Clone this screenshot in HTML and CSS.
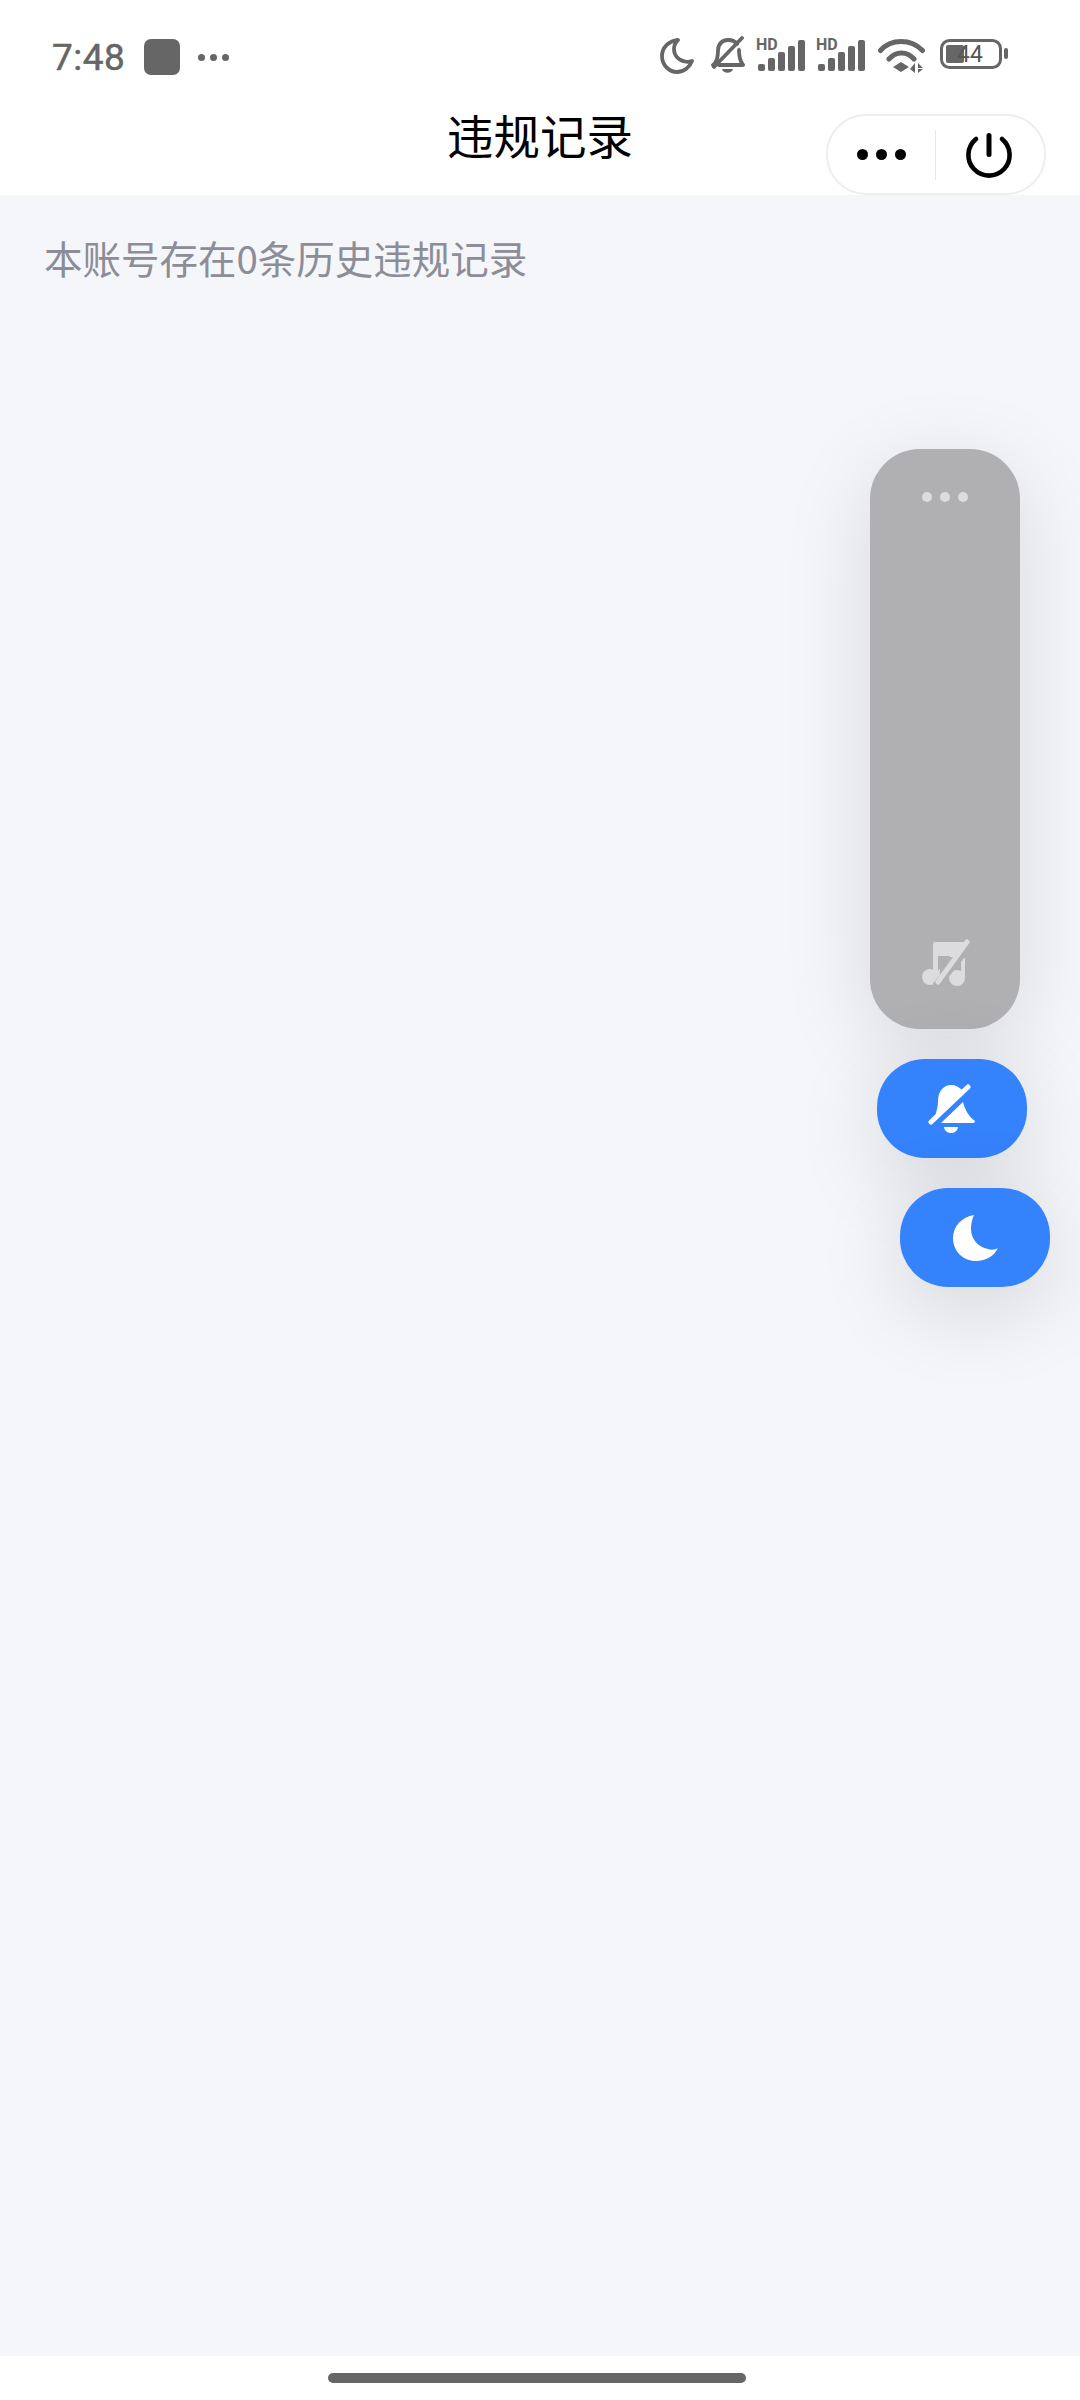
FILE: index.html
```html
<!DOCTYPE html>
<html lang="zh-CN">
<head>
    <meta charset="UTF-8">
    <meta name="viewport" content="width=device-width, initial-scale=1.0">
    <title>违规记录</title>

    <link rel="stylesheet" href="styles.css">
</head>
<body>
    <div class="page">
        <div class="top">
            <div class="status">
                <div class="status-left">
                    <span class="time">7:48</span>
                    <span class="app-square"></span>
                    <span class="status-dots"><i></i><i></i><i></i></span>
                </div>
                <div class="status-right">
                    <svg class="ic-moon" width="34" height="36" viewBox="0 0 34 36">
                        <path d="M18 2C8 3 2 10 2 18C2 27 9 34 17 34C24 34 30 29 32 23C29 24 27 24 25 23.500C18 22 14 17 14 11C14 8 15 5 18 2Z" fill="none" stroke="#666" stroke-width="3.800" stroke-linejoin="round"/>
                    </svg>
                    <svg class="ic-bell" width="35" height="38" viewBox="0 0 35 38">
                        <path d="M3 29C7 26 8 22 8 15C8 7 13 4 18 4C22 4 25 5 27 8M29 14C29 21 30 25 33 29H9" fill="none" stroke="#666" stroke-width="3.800" stroke-linecap="round" stroke-linejoin="round"/>
                        <path d="M4 31L32 2" stroke="#666" stroke-width="3.800" stroke-linecap="round"/>
                        <path d="M12 33H23C22 38 13 38 12 33Z" fill="#666"/>
                    </svg>
                    <svg class="ic-signal" width="50" height="34" viewBox="0 0 50 34">
                        <text x="0" y="12" class="hd">HD</text>
                        <rect x="2" y="26" width="7" height="7" rx="2" fill="#666"/>
                        <rect x="12" y="20" width="7" height="13" rx="2" fill="#666"/>
                        <rect x="22" y="14" width="7" height="19" rx="2" fill="#666"/>
                        <rect x="32" y="8" width="7" height="25" rx="2" fill="#666"/>
                        <rect x="42" y="2" width="7" height="31" rx="2" fill="#666"/>
                    </svg>
                    <svg class="ic-signal" width="50" height="34" viewBox="0 0 50 34">
                        <text x="0" y="12" class="hd">HD</text>
                        <rect x="2" y="26" width="7" height="7" rx="2" fill="#666"/>
                        <rect x="12" y="20" width="7" height="13" rx="2" fill="#666"/>
                        <rect x="22" y="14" width="7" height="19" rx="2" fill="#666"/>
                        <rect x="32" y="8" width="7" height="25" rx="2" fill="#666"/>
                        <rect x="42" y="2" width="7" height="31" rx="2" fill="#666"/>
                    </svg>
                    <svg class="ic-wifi" width="47" height="36" viewBox="0 0 47 36">
                        <path d="M2.500 13.500C13 1.500 33 1.500 44.500 13.500M11 22C18 14 29 14 36 22" fill="none" stroke="#666" stroke-width="5" stroke-linecap="round"/>
                        <path d="M23 25L31 30L23 35L15 30Z" fill="#666"/>
                        <path d="M37 26V36L32 32ZM40 26L45 31H40ZM40 36V32H45Z" fill="#666"/>
                    </svg>
                    <svg class="ic-battery" width="70" height="30" viewBox="0 0 70 30">
                        <rect x="1.500" y="1.500" width="59" height="27" rx="8" fill="none" stroke="#666" stroke-width="3"/>
                        <rect x="6" y="6" width="18" height="18" rx="2" fill="#666"/>
                        <rect x="64" y="9" width="4" height="11" rx="2" fill="#666"/>
                        <text x="30" y="23" class="batt-num">44</text>
                    </svg>
                </div>
            </div>
            <div class="nav">
                <div class="nav-title">违规记录</div>
                <div class="capsule">
                    <div class="capsule-more"><i></i><i></i><i></i></div>
                    <div class="capsule-line"></div>
                    <div class="capsule-power">
                        <svg width="50" height="50" viewBox="0 0 50 50">
                            <path d="M12 9A20.600 20.600 0 1 0 38 9" fill="none" stroke="#000" stroke-width="4.600" stroke-linecap="round"/>
                            <path d="M25 5.500V24.500" stroke="#000" stroke-width="5" stroke-linecap="round"/>
                        </svg>
                    </div>
                </div>
            </div>
        </div>

        <div class="content">
            <p class="tip">本账号存在0条历史违规记录</p>
        </div>

        <div class="bottom">
            <div class="home-bar"></div>
        </div>
    </div>

    <div class="float">
        <div class="panel">
            <div class="panel-dots"><i></i><i></i><i></i></div>
            <svg class="ic-music" width="47" height="47" viewBox="0 0 47 47">
                <path d="M11 38V5Q11 3 13 3H41Q43 3 43 5V38H39V18H18V38Z" fill="#dcdcde"/>
                <circle cx="8" cy="38" r="8" fill="#dcdcde"/>
                <circle cx="35" cy="39" r="8" fill="#dcdcde"/>
                <path d="M16 17H28L16 32Z" fill="#b0b0b3"/>
                <path d="M14 47L47 7" stroke="#b0b0b3" stroke-width="8"/>
                <path d="M16 43L45 3" stroke="#dcdcde" stroke-width="5" stroke-linecap="round"/>
            </svg>
        </div>
        <div class="pill pill-bell">
            <svg width="48" height="50" viewBox="0 0 48 50">
                <path d="M7 33C8 28 10 24 10 17C10 7 16 1 23 1C28 1 31 3 34 6Z" fill="#fff"/>
                <path d="M13 39L35 18C37 26 41 33 47 37Q47 39 45 39Z" fill="#fff"/>
                <path d="M16 43H30C29 51 17 51 16 43Z" fill="#fff"/>
                <path d="M3 38L40 3" stroke="#fff" stroke-width="5" stroke-linecap="round"/>
            </svg>
        </div>
        <div class="pill pill-moon">
            <svg width="45" height="48" viewBox="0 0 45 48">
                <path d="M21 1C9 3 0 12 0 24C0 37 10 47 23 47C33 47 41 42 45 34C42 36 38 36 35 35C25 33 18 25 18 15C18 10 19 5 21 1Z" fill="#fff"/>
            </svg>
        </div>
    </div>
</body>
</html>
```

FILE: styles.css
```css
* {
    box-sizing: border-box;
}
body {
    margin: 0;
    background: #fff;
    font-family: "Noto Sans CJK SC", "Noto Sans", sans-serif;
}
.page {
    width: 1080px;
    height: 2400px;
    display: flex;
    flex-direction: column;
    overflow: hidden;
}

/* status bar + nav */
.top {
    height: 195px;
    background: #fff;
}
.status {
    height: 84px;
    padding: 38px 70px 0 52px;
    display: flex;
    justify-content: space-between;
    align-items: flex-start;
}
.status-left {
    display: flex;
    align-items: center;
    height: 56px;
    margin-top: -9px;
}
.time {
    font-family: Roboto, sans-serif;
    font-size: 37px;
    letter-spacing: .5px;
    color: #666;
    -webkit-text-stroke: .5px #666;
}
.app-square {
    width: 36px;
    height: 36px;
    margin-left: 19px;
    border-radius: 7px;
    background: #666;
}
.status-dots {
    display: flex;
    gap: 5px;
    margin-left: 18px;
}
.status-dots i {
    width: 7px;
    height: 7px;
    border-radius: 50%;
    background: #666;
}
.status-right {
    display: flex;
    align-items: flex-start;
}
.ic-bell {
    margin: -2px 0 0 16px;
}
.ic-signal {
    margin: 0 0 0 10px;
    overflow: visible;
}
.ic-bell + .ic-signal {
    margin-left: 11px;
}
.ic-wifi {
    margin: -1px 0 0 12px;
}
.ic-battery {
    margin: 1px 0 0 15px;
}
.hd {
    font-family: Roboto, sans-serif;
    font-size: 16px;
    font-weight: 700;
    fill: #666;
}
.batt-num {
    font-family: Roboto, sans-serif;
    font-size: 23px;
    text-anchor: middle;
    fill: #555;
}

.nav {
    position: relative;
    height: 111px;
}
.nav-title {
    padding-top: 18px;
    text-align: center;
    font-size: 46.500px;
    line-height: 64px;
    color: #000;
}
.capsule {
    position: absolute;
    top: 30px;
    right: 34px;
    width: 220px;
    height: 81px;
    display: flex;
    align-items: center;
    border: 2px solid #eee;
    border-radius: 40px;
    background: #fff;
}
.capsule-more {
    width: 107px;
    display: flex;
    justify-content: center;
    gap: 8px;
}
.capsule-more i {
    width: 11px;
    height: 11px;
    border-radius: 50%;
    background: #000;
}
.capsule-line {
    width: 1px;
    height: 50px;
    background: #e6e6e6;
}
.capsule-power {
    flex: 1;
    display: flex;
    justify-content: center;
    padding-right: 3px;
}

.content {
    flex: 1;
    background: #f5f6fa;
    padding: 35px 44px 0;
}
.tip {
    margin: 0;
    font-size: 38.500px;
    line-height: 54px;
    color: #8c8d97;
}

.bottom {
    height: 44px;
    padding-top: 17px;
    background: #fff;
}
.home-bar {
    width: 418px;
    height: 10px;
    margin-left: 328px;
    border-radius: 5px;
    background: #666;
}

/* floating buttons on the right */
.float {
    position: absolute;
    top: 449px;
    left: 870px;
    width: 180px;
    display: flex;
    flex-direction: column;
    align-items: flex-start;
}
.panel {
    width: 150px;
    height: 580px;
    padding: 43px 0 43px;
    display: flex;
    flex-direction: column;
    align-items: center;
    justify-content: space-between;
    border-radius: 50px;
    background: #b0b0b3;
    box-shadow: 0 20px 90px rgba(0, 0, 0, .12);
}
.ic-music {
    overflow: visible;
}
.panel-dots {
    display: flex;
    gap: 8px;
}
.panel-dots i {
    width: 10px;
    height: 10px;
    border-radius: 50%;
    background: #dcdcde;
}
.pill {
    width: 150px;
    height: 99px;
    display: flex;
    align-items: center;
    justify-content: center;
    border-radius: 48px;
    background: #3582fd;
    box-shadow: 0 20px 90px rgba(0, 0, 0, .14);
}
.pill-bell {
    margin: 30px 0 0 7px;
}
.pill-moon {
    margin: 30px 0 0 30px;
}
```
